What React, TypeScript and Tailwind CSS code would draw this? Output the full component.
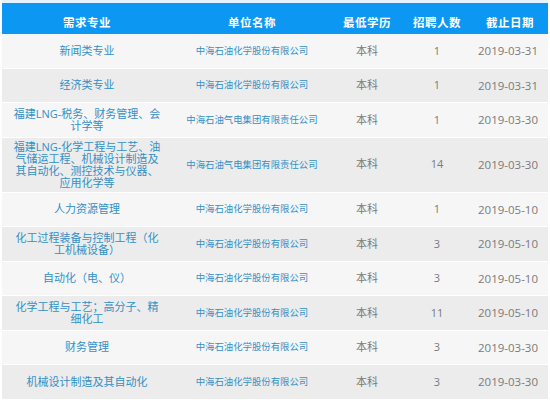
const rows: { major: string[]; company: string; degree: string; count: string; date: string; tall?: boolean }[] = [
  { major: ["新闻类专业"], company: "中海石油化学股份有限公司", degree: "本科", count: "1", date: "2019-03-31" },
  { major: ["经济类专业"], company: "中海石油化学股份有限公司", degree: "本科", count: "1", date: "2019-03-31" },
  { major: ["福建LNG-税务、财务管理、会", "计学等"], company: "中海石油气电集团有限责任公司", degree: "本科", count: "1", date: "2019-03-30" },
  {
    major: ["福建LNG-化学工程与工艺、油", "气储运工程、机械设计制造及", "其自动化、测控技术与仪器、", "应用化学等"],
    company: "中海石油气电集团有限责任公司",
    degree: "本科",
    count: "14",
    date: "2019-03-30",
    tall: true,
  },
  { major: ["人力资源管理"], company: "中海石油化学股份有限公司", degree: "本科", count: "1", date: "2019-05-10" },
  { major: ["化工过程装备与控制工程（化", "工机械设备）"], company: "中海石油化学股份有限公司", degree: "本科", count: "3", date: "2019-05-10" },
  { major: ["自动化（电、仪）"], company: "中海石油化学股份有限公司", degree: "本科", count: "3", date: "2019-05-10" },
  { major: ["化学工程与工艺；高分子、精", "细化工"], company: "中海石油化学股份有限公司", degree: "本科", count: "11", date: "2019-05-10" },
  { major: ["财务管理"], company: "中海石油化学股份有限公司", degree: "本科", count: "3", date: "2019-03-30" },
  { major: ["机械设计制造及其自动化"], company: "中海石油化学股份有限公司", degree: "本科", count: "3", date: "2019-03-30" },
];

const cols = "grid grid-cols-[170px_160px_70px_70px_76px]";

export default function App() {
  return (
    <div className="w-[550px] h-[400px] overflow-hidden bg-white px-[2px] font-['Open_Sans','Noto_Sans_CJK_SC',sans-serif]">
      <div className="h-[3px] bg-[#e6f2fc]" />
      {/* 表头 */}
      <div className={`${cols} h-[31px] items-end pb-[4px] bg-[#0c97f2] text-white text-[11.5px] font-bold leading-[14px] tracking-[0.5px]`}>
        <div className="text-center">需求专业</div>
        <div className="text-center">单位名称</div>
        <div className="text-center">最低学历</div>
        <div className="text-center">招聘人数</div>
        <div className="text-center">截止日期</div>
      </div>

      {rows.map((r, i) => (
        <div
          key={i}
          className={`${cols} items-center border-b border-white ${r.tall ? "h-[55px]" : "h-[34.5px]"} ${
            i % 2 === 0 ? "bg-[#f6f6f6]" : "bg-[#ececec]"
          }`}
        >
          <div className="text-center text-[11px] leading-[12px] text-[#3390c6]">
            {r.major.map((line, j) => (
              <div key={j}>{line}</div>
            ))}
          </div>
          <div className="text-center text-[9.4px] leading-[12px] text-[#3390c6] whitespace-nowrap">{r.company}</div>
          <div className="text-center text-[11px] text-[#7a7a7a]">{r.degree}</div>
          <div className="text-center text-[11px] text-[#7a7a7a]">{r.count}</div>
          <div className="text-center text-[11.5px] text-[#7a7a7a] pr-[4px]">{r.date}</div>
        </div>
      ))}
    </div>
  );
}
